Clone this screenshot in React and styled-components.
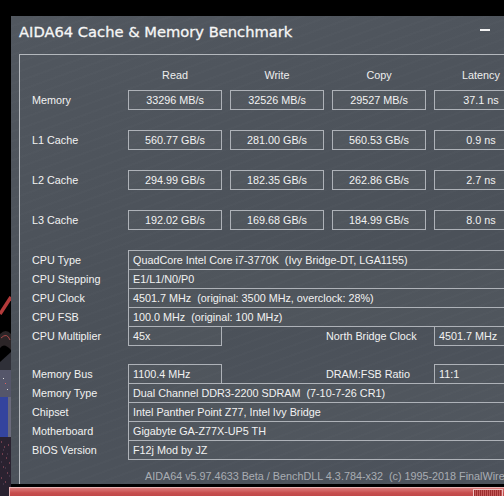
import React from 'react';
import styled, { createGlobalStyle } from 'styled-components';

const GlobalStyle = createGlobalStyle`
  html, body {
    margin: 0;
    padding: 0;
    background: #000;
  }
  body {
    overflow: hidden;
  }
`;

const BENCH_COLUMNS = ['Read', 'Write', 'Copy', 'Latency'];

const BENCH_ROWS = [
  { label: 'Memory', values: ['33296 MB/s', '32526 MB/s', '29527 MB/s', '37.1 ns'] },
  { label: 'L1 Cache', values: ['560.77 GB/s', '281.00 GB/s', '560.53 GB/s', '0.9 ns'] },
  { label: 'L2 Cache', values: ['294.99 GB/s', '182.35 GB/s', '262.86 GB/s', '2.7 ns'] },
  { label: 'L3 Cache', values: ['192.02 GB/s', '169.68 GB/s', '184.99 GB/s', '8.0 ns'] },
];

const CPU_INFO = [
  { label: 'CPU Type', value: 'QuadCore Intel Core i7-3770K  (Ivy Bridge-DT, LGA1155)' },
  { label: 'CPU Stepping', value: 'E1/L1/N0/P0' },
  { label: 'CPU Clock', value: '4501.7 MHz  (original: 3500 MHz, overclock: 28%)' },
  { label: 'CPU FSB', value: '100.0 MHz  (original: 100 MHz)' },
  { label: 'CPU Multiplier', value: '45x', side: 'North Bridge Clock', sideValue: '4501.7 MHz' },
];

const BOARD_INFO = [
  { label: 'Memory Bus', value: '1100.4 MHz', side: 'DRAM:FSB Ratio', sideValue: '11:1' },
  { label: 'Memory Type', value: 'Dual Channel DDR3-2200 SDRAM  (7-10-7-26 CR1)' },
  { label: 'Chipset', value: 'Intel Panther Point Z77, Intel Ivy Bridge' },
  { label: 'Motherboard', value: 'Gigabyte GA-Z77X-UP5 TH' },
  { label: 'BIOS Version', value: 'F12j Mod by JZ' },
];

const Screen = styled.div`
  position: relative;
  width: 504px;
  height: 496px;
  box-sizing: border-box;
  padding-top: 16px;
  overflow: hidden;
  background: #000;
  display: flex;
  align-items: flex-start;
  font-family: "Liberation Sans", Arial, sans-serif;
  font-size: 10.8px;
  color: #f2f2f2;
`;

const Wallpaper = styled.svg`
  flex: 0 0 11px;
  display: block;
`;

const Window = styled.div`
  flex: 0 0 530px;
  height: 468px;
  display: flex;
  flex-direction: column;
  overflow: hidden;
  background:
    repeating-linear-gradient(160deg, rgba(255, 255, 255, 0.012) 0 2px, transparent 2px 9px),
    linear-gradient(165deg, #51575f 0%, #4b5159 55%, #4d535c 100%);
`;

const TitleBar = styled.div`
  height: 38px;
  box-sizing: border-box;
  padding: 7px 51px 0 8px;
  display: flex;
  align-items: flex-start;
  flex-shrink: 0;
`;

const Title = styled.div`
  flex: 1;
  font-family: "DejaVu Sans", Verdana, sans-serif;
  font-size: 14.7px;
  line-height: 17px;
  color: #f6f6f6;
  -webkit-text-stroke: 0.3px #f6f6f6;
  white-space: nowrap;
`;

const Minimize = styled.span`
  display: block;
  width: 10px;
  height: 2px;
  margin-top: 6px;
  background: #f2f2f2;
`;

const Frame = styled.div`
  flex: 1;
  margin-left: 8px;
  border-top: 1px solid #b4b8bd;
  border-left: 1px solid #b4b8bd;
  padding: 10px 0 0 12px;
  display: flex;
  flex-direction: column;
`;

const Grid = styled.div`
  display: grid;
  grid-template-columns: 88px repeat(4, 94px);
  column-gap: 8px;
  height: 20px;
  align-items: center;
`;

const HeaderRow = styled(Grid)`
  margin-bottom: 5px;
`;

const ColumnTitle = styled.div`
  text-align: center;
  color: #eeeeee;
`;

const BenchRows = styled.div`
  display: flex;
  flex-direction: column;
  gap: 20px;
`;

const Label = styled.div`
  white-space: nowrap;
  line-height: 18px;
`;

const Box = styled.div`
  box-sizing: border-box;
  height: 20px;
  border: 1px solid #aeb2b8;
  background: rgba(255, 255, 255, 0.025);
  line-height: 18px;
  white-space: pre;
  overflow: hidden;
  text-align: ${(p) => (p.$center ? 'center' : 'left')};
  padding: ${(p) => (p.$center ? '0' : '0 0 0 4px')};
`;

const InfoGroup = styled.div`
  display: flex;
  flex-direction: column;
  margin-top: ${(p) => p.$gap}px;
`;

const InfoRow = styled.div`
  display: grid;
  grid-template-columns: ${(p) => (p.$split ? '88px 94px 196px 94px' : '88px 400px')};
  column-gap: 8px;
  align-items: center;
  height: 20px;
  & + & {
    margin-top: -1px;
  }
`;

const SideLabel = styled.div`
  padding-left: 96px;
  white-space: nowrap;
  line-height: 18px;
`;

const Footer = styled.div`
  margin: 9px 0 0 113px;
  line-height: 14px;
  white-space: pre;
  color: #a9adb3;
`;

const OtherWindow = styled.div`
  position: absolute;
  left: 9px;
  top: 487px;
  width: 510px;
  height: 14px;
  box-sizing: border-box;
  border: 1px solid #eab6b6;
  border-right: none;
  background: linear-gradient(#dc7c7c 0%, #c74e4e 40%, #b63e3e 100%);
  display: flex;
  justify-content: flex-end;
  padding-top: 1px;
`;

const OtherButton = styled.span`
  display: block;
  width: 28px;
  height: 12px;
  margin-right: 16px;
  border: 1px solid #f0c2c2;
  background: repeating-linear-gradient(90deg, #9c2e2e 0 1px, #c25858 1px 2px);
`;

function WallpaperStrip() {
  return (
    <Wallpaper width="11" height="480" viewBox="0 0 11 480">
      <rect width="11" height="480" fill="#000" />
      <path d="M0 298 L11 281" stroke="#b33a3a" strokeWidth="3.5" />
      <path d="M0 318 Q6 312 11 318 L11 334 Q4 326 0 332 Z" fill="#2b2527" />
      <path d="M1 322 Q7 316 10 324" stroke="#a84848" strokeWidth="1" fill="none" />
      <path d="M0 346 L11 336 L11 360 L0 366 Z" fill="#2f3038" />
      <rect x="0" y="354" width="11" height="27" fill="#55566a" />
      <rect x="3" y="362" width="1" height="1" fill="#e0e0e0" />
      <rect x="5" y="367" width="1" height="1" fill="#e06060" />
      <rect x="7" y="373" width="1" height="1" fill="#d0d0d0" />
      <rect x="0" y="381" width="8" height="40" fill="#34449e" />
      <rect x="8" y="381" width="3" height="40" fill="#6a6a7c" />
      <rect x="0" y="421" width="11" height="59" fill="#2a2230" />
      <path d="M1 426h1M4 431h1M8 429h1M2 438h1M6 442h1M9 447h1M3 451h1M7 457h1M1 462h1M5 466h1"
        stroke="#b45a6a" strokeWidth="1" />
      <path d="M3 434h1M7 438h1M1 446h1M5 452h1M9 460h1M3 468h1"
        stroke="#5a4a60" strokeWidth="1" />
    </Wallpaper>
  );
}

function InfoLine({ row }) {
  if (row.side) {
    return (
      <InfoRow $split>
        <Label>{row.label}</Label>
        <Box>{row.value}</Box>
        <SideLabel>{row.side}</SideLabel>
        <Box>{row.sideValue}</Box>
      </InfoRow>
    );
  }
  return (
    <InfoRow>
      <Label>{row.label}</Label>
      <Box>{row.value}</Box>
    </InfoRow>
  );
}

export default function App() {
  return (
    <>
      <GlobalStyle />
      <Screen>
        <WallpaperStrip />
        <Window>
          <TitleBar>
            <Title>AIDA64 Cache &amp; Memory Benchmark</Title>
            <Minimize />
          </TitleBar>
          <Frame>
            <HeaderRow>
              <div />
              {BENCH_COLUMNS.map((c) => (
                <ColumnTitle key={c}>{c}</ColumnTitle>
              ))}
            </HeaderRow>
            <BenchRows>
              {BENCH_ROWS.map((row) => (
                <Grid key={row.label}>
                  <Label>{row.label}</Label>
                  {row.values.map((v, i) => (
                    <Box key={i} $center>{v}</Box>
                  ))}
                </Grid>
              ))}
            </BenchRows>
            <InfoGroup $gap={20}>
              {CPU_INFO.map((row) => (
                <InfoLine key={row.label} row={row} />
              ))}
            </InfoGroup>
            <InfoGroup $gap={18}>
              {BOARD_INFO.map((row) => (
                <InfoLine key={row.label} row={row} />
              ))}
            </InfoGroup>
            <Footer>AIDA64 v5.97.4633 Beta / BenchDLL 4.3.784-x32  (c) 1995-2018 FinalWire Ltd.</Footer>
          </Frame>
        </Window>
        <OtherWindow>
          <OtherButton />
        </OtherWindow>
      </Screen>
    </>
  );
}
